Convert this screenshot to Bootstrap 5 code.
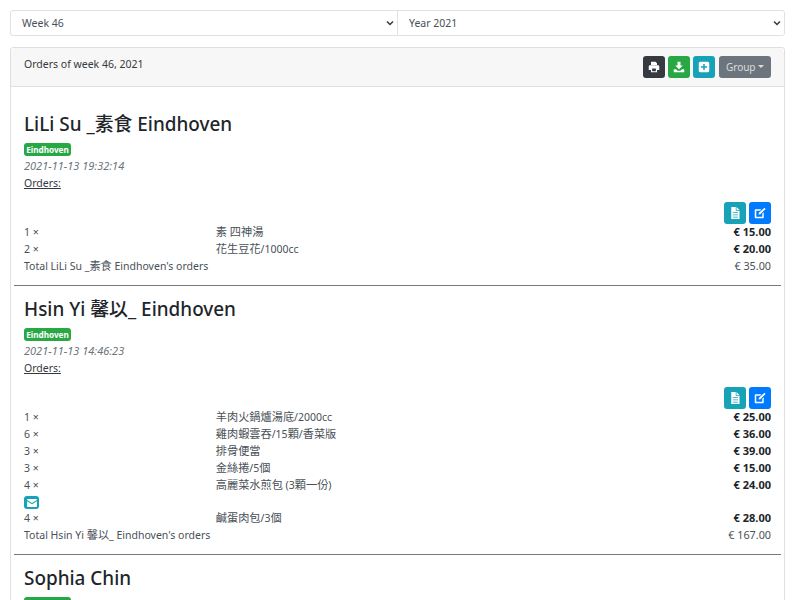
<!DOCTYPE html>
<html lang="en">
<head>
<meta charset="utf-8">
<title>Orders</title>
<link rel="stylesheet" href="https://cdn.jsdelivr.net/npm/bootstrap@5.3.0/dist/css/bootstrap.min.css">
<style>
html,body{overflow:hidden;height:600px}
body{font-family:"Noto Sans","Noto Sans CJK TC",sans-serif;font-size:10.5px;line-height:17px;color:#212529;background:#fff}
.cjk{font-size:11.2px;line-height:1}
.wrap-page{padding:10px 15px 0 10px}
.pick{font-size:10.5px;height:26px;padding:0 12px 0 11px;line-height:24px;color:#495057;border-color:#dee2e6;background-size:8px 6px;background-position:right 3px center;background-image:url("data:image/svg+xml,%3csvg xmlns='http://www.w3.org/2000/svg' viewBox='0 0 16 12'%3e%3cpath fill='none' stroke='%23343a40' stroke-width='3' d='M2 3l6 6 6-6'/%3e%3c/svg%3e")}
.pick-row{margin-bottom:11px}
.pick-row .pick:first-child{border-radius:3px 0 0 3px}
.pick-row .pick:last-child{border-radius:0 3px 3px 0;margin-left:-1px}
.orders-card{border-color:#dfdfdf;border-radius:3px}
.orders-head{height:39px;padding:8px 13px;background:#f7f7f7;color:#343a40;border-color:#dfdfdf}
.orders-body{padding:3px}
.tools{gap:3px}
.tb{width:22px;height:22px;padding:0;display:inline-flex;align-items:center;justify-content:center;border-radius:3px;border:0}
.tb svg{width:12px;height:12px;fill:#fff}
.tb-dark{background:#343a40}.tb-green{background:#28a745}.tb-teal{background:#17a2b8}.tb-blue{background:#007bff}
.group-btn{height:22px;width:52px;padding:0;font-size:10px;line-height:22px;background:#6c757d;color:#ddd;border:0;border-radius:3px;margin-left:1px}
.customer{padding:21px 10px 0}
.customer-next{padding-top:10px}
.customer h4{font-size:18.9px;line-height:26px;font-weight:500;margin:0 0 6px;color:#212529}
.loc{display:block;width:47px;height:13px;font-size:8.2px;line-height:13px;font-weight:700;text-align:center;background:#28a745;color:#fff;border-radius:3px}
.stamp{font-size:11px;font-style:italic;color:#6c757d;margin-top:1px}
.ordlink{text-decoration:underline;color:#343a40;margin-top:1px}
.acts{display:flex;justify-content:flex-end;gap:3px;padding:0 10px;margin-top:10px;height:22px}
.line{margin:0;color:#495057}
.line>div{padding:0 10px}
.price{font-size:11px;line-height:16px;font-weight:700;color:#212529}
.total-price{font-size:10.8px;line-height:16px;color:#495057}
.mini{width:15px;height:13px;border-radius:3px;background:#17a2b8;margin:2px 10px 1px;display:flex;align-items:center;justify-content:center}
.mini svg{width:10px;height:8px}
.sep{margin:10px 0 0;border-top:1px solid #777;opacity:1}
</style>
</head>
<body>
<div class="wrap-page">
  <div class="d-flex pick-row">
    <select class="form-select pick"><option>Week 46</option></select>
    <select class="form-select pick"><option>Year 2021</option></select>
  </div>
  <div class="card orders-card">
    <div class="card-header orders-head d-flex justify-content-between">
      <div>Orders of week 46, 2021</div>
      <div class="d-flex tools">
        <button class="tb tb-dark" aria-label="Print"><svg viewBox="0 0 16 16"><path d="M4 1h6l2 2v3H4zM1 7a1.500 1.500 0 0 1 1.500-1.500h11A1.500 1.500 0 0 1 15 7v5h-3v3H4v-3H1zm4.500 3v3.500h5V10z" fill-rule="evenodd"/></svg></button>
        <button class="tb tb-green" aria-label="Download"><svg viewBox="0 0 16 16"><path d="M6 1h4v5h3l-5 5-5-5h3zM1 11h3l2 2h4l2-2h3v4H1z"/></svg></button>
        <button class="tb tb-teal" aria-label="Add"><svg viewBox="0 0 16 16"><path fill-rule="evenodd" d="M3 1h10a2 2 0 0 1 2 2v10a2 2 0 0 1-2 2H3a2 2 0 0 1-2-2V3a2 2 0 0 1 2-2zm4 3v3H4v2h3v3h2V9h3V7H9V4z"/></svg></button>
        <button class="group-btn dropdown-toggle">Group</button>
      </div>
    </div>
    <div class="card-body orders-body">

      <div class="customer">
        <h4>LiLi Su _素食 Eindhoven</h4>
        <span class="loc">Eindhoven</span>
        <div class="stamp">2021-11-13 19:32:14</div>
        <div class="ordlink">Orders:</div>
      </div>
      <div class="acts">
        <button class="tb tb-teal" aria-label="Details"><svg viewBox="0 0 16 16"><path fill-rule="evenodd" d="M3 0h6v5h5v11H3zM10 0l4 4h-4zM5 7v1h7V7zm0 3v1h7v-1zm0 3v1h7v-1z"/></svg></button>
        <button class="tb tb-blue" aria-label="Edit"><svg viewBox="0 0 16 16"><path d="M14 1l1.500 1.500-7 7L6 10l.5-2.500zM2 3h8L8 5H3v8h8V9l2-2v7a1 1 0 0 1-1 1H2a1 1 0 0 1-1-1V4a1 1 0 0 1 1-1z"/></svg></button>
      </div>
      <div class="row line"><div class="col-3">1 ×</div><div class="col-6"><span class="cjk">素 四神湯</span></div><div class="col-3 text-end price">€ 15.00</div></div>
      <div class="row line"><div class="col-3">2 ×</div><div class="col-6"><span class="cjk">花生豆花</span>/1000cc</div><div class="col-3 text-end price">€ 20.00</div></div>
      <div class="row line"><div class="col-9">Total LiLi Su _<span class="cjk">素食</span> Eindhoven's orders</div><div class="col-3 text-end total-price">€ 35.00</div></div>
      <hr class="sep">

      <div class="customer customer-next">
        <h4>Hsin Yi 馨以_ Eindhoven</h4>
        <span class="loc">Eindhoven</span>
        <div class="stamp">2021-11-13 14:46:23</div>
        <div class="ordlink">Orders:</div>
      </div>
      <div class="acts">
        <button class="tb tb-teal" aria-label="Details"><svg viewBox="0 0 16 16"><path fill-rule="evenodd" d="M3 0h6v5h5v11H3zM10 0l4 4h-4zM5 7v1h7V7zm0 3v1h7v-1zm0 3v1h7v-1z"/></svg></button>
        <button class="tb tb-blue" aria-label="Edit"><svg viewBox="0 0 16 16"><path d="M14 1l1.500 1.500-7 7L6 10l.5-2.500zM2 3h8L8 5H3v8h8V9l2-2v7a1 1 0 0 1-1 1H2a1 1 0 0 1-1-1V4a1 1 0 0 1 1-1z"/></svg></button>
      </div>
      <div class="row line"><div class="col-3">1 ×</div><div class="col-6"><span class="cjk">羊肉火鍋爐湯底</span>/2000cc</div><div class="col-3 text-end price">€ 25.00</div></div>
      <div class="row line"><div class="col-3">6 ×</div><div class="col-6"><span class="cjk">雞肉蝦雲吞</span>/15<span class="cjk">顆</span>/<span class="cjk">香菜版</span></div><div class="col-3 text-end price">€ 36.00</div></div>
      <div class="row line"><div class="col-3">3 ×</div><div class="col-6"><span class="cjk">排骨便當</span></div><div class="col-3 text-end price">€ 39.00</div></div>
      <div class="row line"><div class="col-3">3 ×</div><div class="col-6"><span class="cjk">金絲捲</span>/5<span class="cjk">個</span></div><div class="col-3 text-end price">€ 15.00</div></div>
      <div class="row line"><div class="col-3">4 ×</div><div class="col-6"><span class="cjk">高麗菜水煎包</span> (3<span class="cjk">顆一份</span>)</div><div class="col-3 text-end price">€ 24.00</div></div>
      <div class="mini"><svg viewBox="0 0 10 8"><path fill="#fff" d="M0 1a1 1 0 0 1 1-1h8a1 1 0 0 1 1 1L5 4zM0 2.200l5 3 5-3V7a1 1 0 0 1-1 1H1a1 1 0 0 1-1-1z"/></svg></div>
      <div class="row line"><div class="col-3">4 ×</div><div class="col-6"><span class="cjk">鹹蛋肉包</span>/3<span class="cjk">個</span></div><div class="col-3 text-end price">€ 28.00</div></div>
      <div class="row line"><div class="col-9">Total Hsin Yi <span class="cjk">馨以</span>_ Eindhoven's orders</div><div class="col-3 text-end total-price">€ 167.00</div></div>
      <hr class="sep">

      <div class="customer customer-next">
        <h4>Sophia Chin</h4>
        <span class="loc">Eindhoven</span>
      </div>
    </div>
  </div>
</div>
<script src="https://cdn.jsdelivr.net/npm/bootstrap@5.3.0/dist/js/bootstrap.bundle.min.js"></script>
</body>
</html>
